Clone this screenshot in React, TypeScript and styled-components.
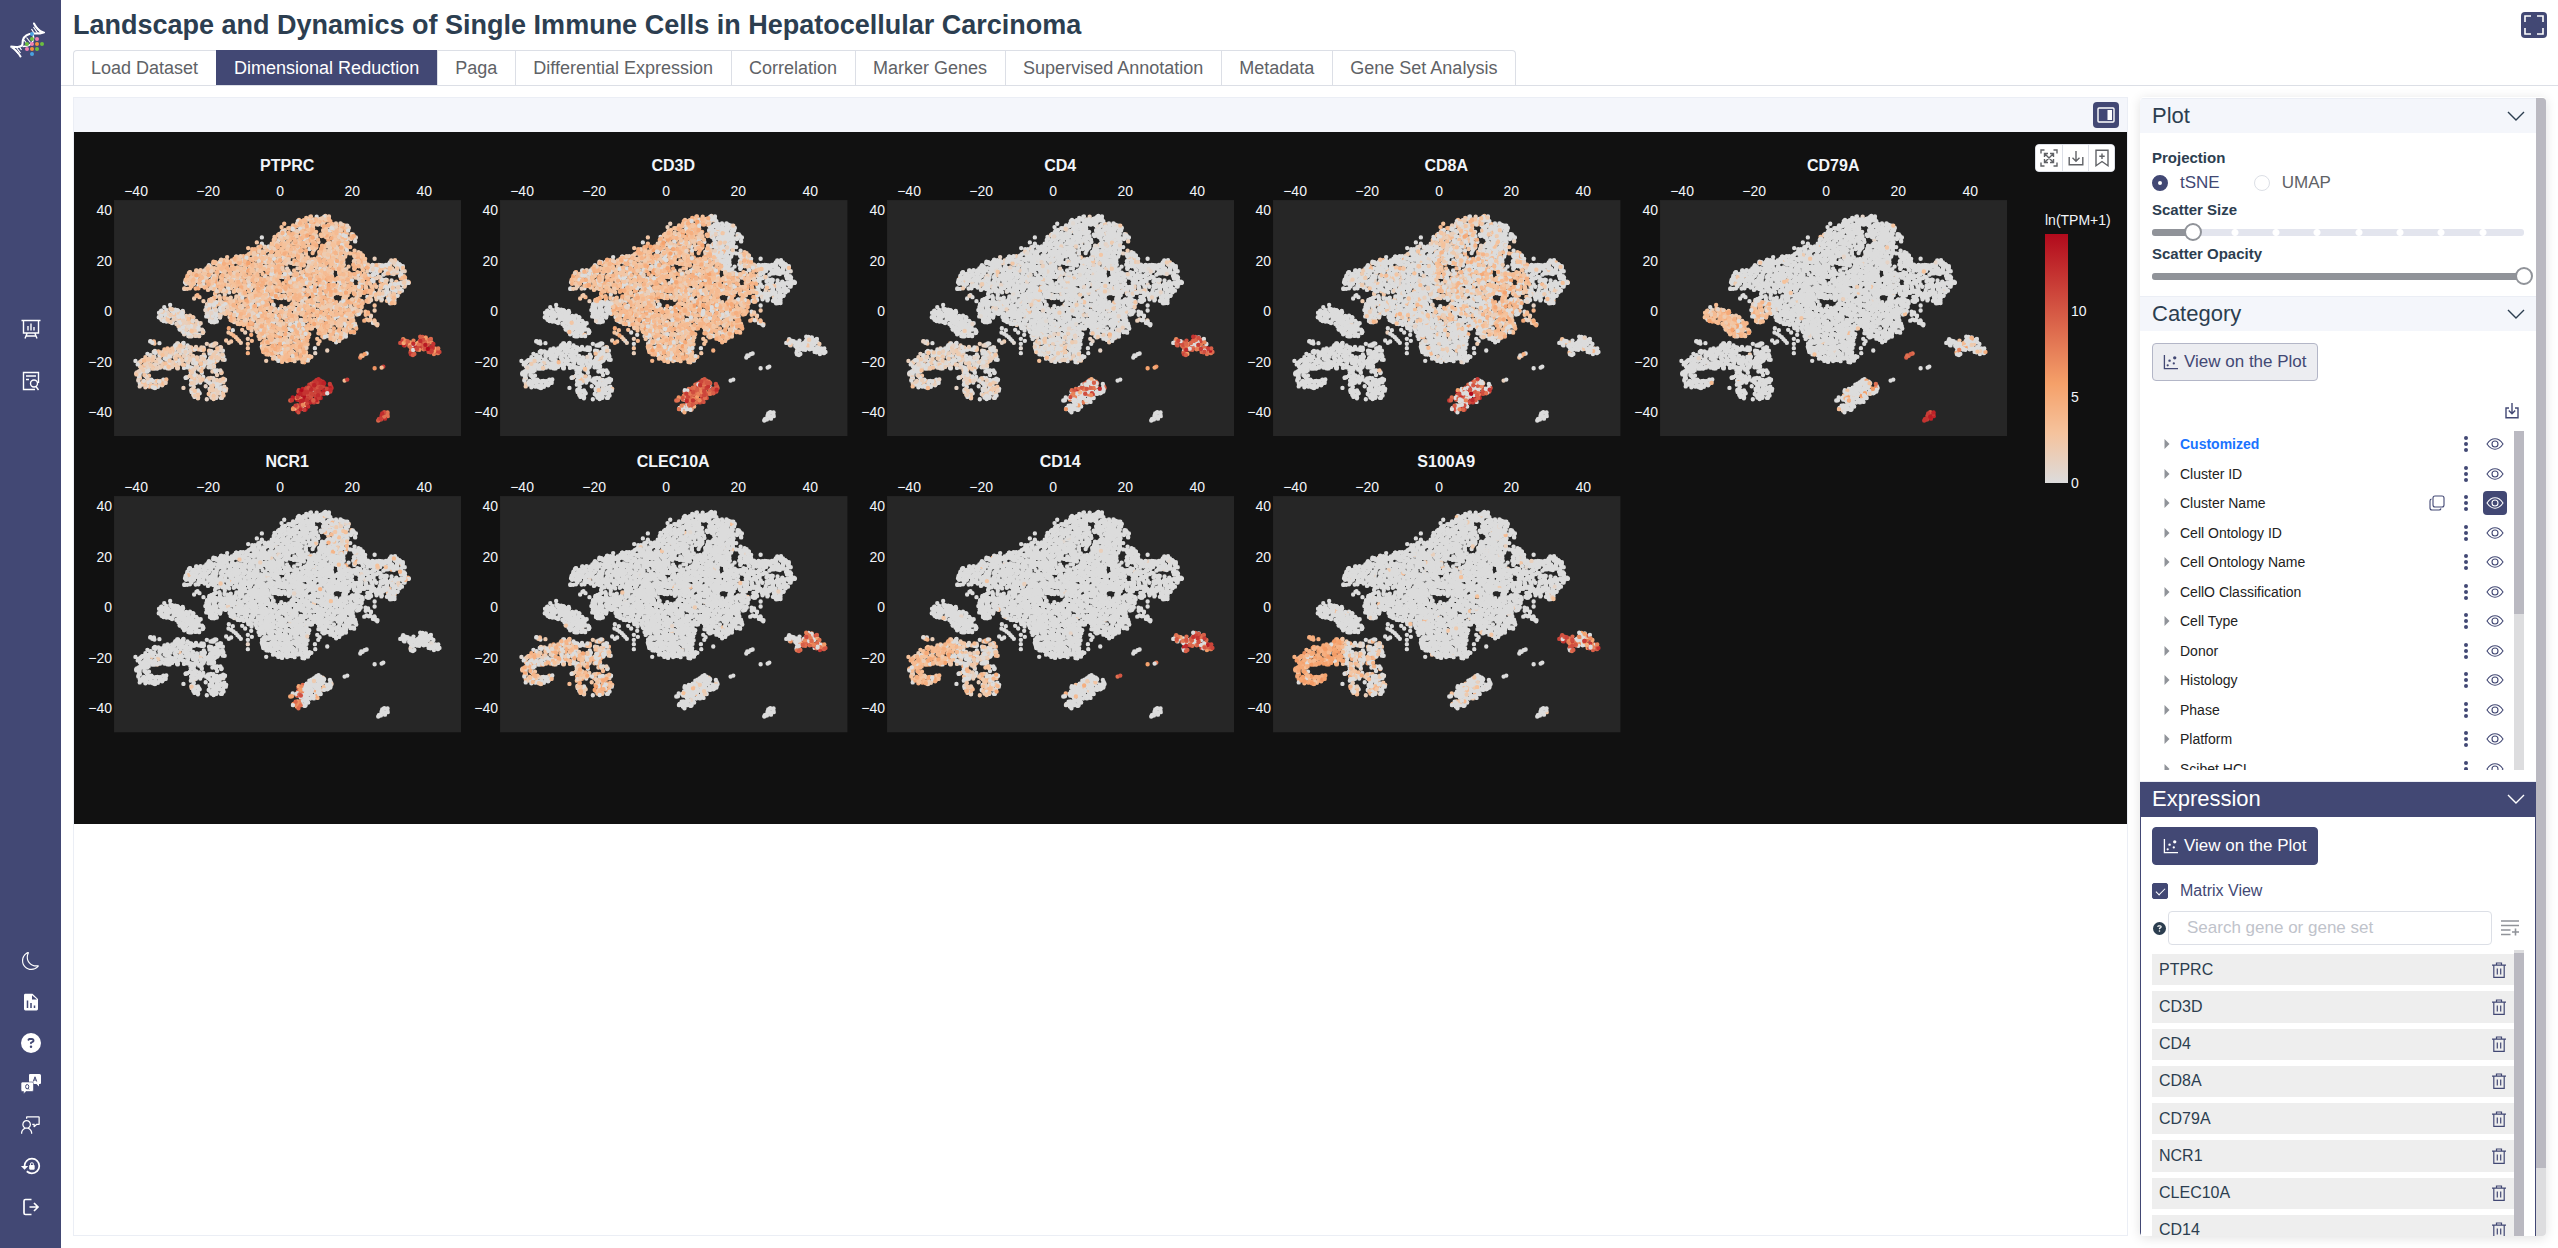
import React, { useState } from "react";
import styled, { createGlobalStyle } from "styled-components";
import { BsMoon } from "react-icons/bs";
import { FaCircleQuestion } from "react-icons/fa6";
import { MdLockReset } from "react-icons/md";
import { VscFeedback } from "react-icons/vsc";

const c = {
  brand: "#424874",
  ink: "#2c3e50",
  text: "#606266",
  line: "#dcdfe6",
  lineSoft: "#ebeef5",
  head: "#f4f6fb",
  grey: "#909399",
  thumb: "#bab9c1",
  track: "#dddddf",
};

const GlobalStyle = createGlobalStyle`
  *, *::before, *::after { box-sizing: border-box; }
  body {
    margin: 0;
    background: #fff;
    color: ${c.ink};
    font-family: "Liberation Sans", Arial, sans-serif;
    font-size: 16px;
    overflow: hidden;
  }
  button, input { font: inherit; color: inherit; margin: 0; }
  ul { list-style: none; margin: 0; padding: 0; }
  h1, h2 { margin: 0; }
  svg { display: block; }
`;

/* ---------- scatter data ---------- */

type Pt = [number, number];
type Region = "main" | "bcell" | "mac" | "prolif" | "dc" | "plasma" | "spotA" | "spotB" | "spotC";
type Cell = { x: number; y: number; region: Region };

function makeRandom(seed: number) {
  let s = seed;
  return () => {
    s = (s + 0x6d2b79f5) | 0;
    let t = Math.imul(s ^ (s >>> 15), 1 | s);
    t = (t + Math.imul(t ^ (t >>> 7), 61 | t)) ^ t;
    return ((t ^ (t >>> 14)) >>> 0) / 4294967296;
  };
}

const shapes: { region: Region; poly: Pt[] }[] = [
  {
    region: "main",
    poly: [[690,230],[745,228],[756,243],[750,252],[795,250],[804,258],[810,275],[830,295],[822,320],[836,317],[830,335],[858,348],[866,372],[885,377],[905,367],[930,357],[960,364],[976,385],[973,405],[987,430],[963,455],[943,490],[930,494],[915,487],[880,480],[858,492],[845,510],[828,540],[823,580],[800,588],[765,612],[740,603],[715,583],[695,580],[686,600],[680,630],[698,655],[683,672],[660,665],[585,667],[577,655],[547,640],[538,600],[528,580],[490,556],[458,553],[445,530],[425,520],[418,545],[400,554],[380,540],[372,515],[373,500],[385,478],[410,470],[400,455],[345,446],[307,450],[308,430],[330,392],[375,387],[390,367],[440,355],[500,345],[530,322],[577,310],[580,287],[600,275],[630,262],[650,242]],
  },
  { region: "main", poly: [[853,513],[868,520],[882,540],[900,547],[893,557],[870,550],[850,543]] },
  { region: "bcell", poly: [[230,512],[255,500],[268,490],[278,507],[310,512],[345,535],[363,550],[366,570],[378,578],[362,590],[330,592],[302,583],[288,560],[255,545],[232,540]] },
  {
    region: "mac",
    poly: [[165,660],[200,656],[222,632],[260,627],[290,608],[310,607],[325,617],[375,620],[373,630],[332,636],[345,652],[380,640],[390,610],[402,607],[430,622],[430,640],[443,656],[425,663],[412,665],[405,690],[425,690],[425,708],[440,722],[430,732],[440,750],[432,773],[400,778],[378,770],[388,750],[355,738],[332,745],[328,725],[307,710],[330,700],[320,685],[230,687],[205,692],[212,710],[240,720],[263,715],[260,728],[235,743],[205,747],[178,740],[164,718],[165,697],[185,690],[168,675]],
  },
  { region: "mac", poly: [[333,745],[358,752],[362,782],[332,778]] },
  { region: "mac", poly: [[203,595],[226,596],[226,614],[210,606]] },
  { region: "prolif", poly: [[690,725],[712,714],[734,725],[735,745],[753,727],[758,740],[750,757],[730,765],[712,788],[690,788],[680,808],[655,820],[637,812],[640,795],[656,784],[627,782],[630,772],[652,772],[653,747],[680,742]] },
  { region: "dc", poly: [[957,605],[972,594],[985,602],[1002,602],[1012,605],[1018,590],[1050,592],[1058,605],[1078,625],[1078,648],[1060,643],[1040,635],[1012,632],[998,648],[990,643],[985,622],[960,620]] },
  { region: "plasma", poly: [[887,832],[900,816],[922,813],[923,830],[908,845],[890,845]] },
];

const gaps: [number, number, number, number, number][] = [
  [818, 322, 14, 16, 0.15], [806, 366, 12, 22, 0.04], [764, 402, 8, 14, 0.05], [722, 303, 18, 11, 0.15],
  [716, 266, 8, 10, 0.1], [600, 490, 30, 13, 0.18], [930, 410, 26, 6, 0.05], [768, 472, 8, 8, 0],
  [903, 395, 9, 9, 0.2], [822, 425, 12, 12, 0.3], [640, 385, 28, 10, 0.35], [548, 405, 12, 10, 0.35],
  [440, 465, 30, 10, 0.4], [600, 425, 14, 10, 0.45], [888, 440, 10, 18, 0.3], [850, 470, 12, 8, 0.35],
  [690, 340, 20, 14, 0.45], [700, 575, 16, 8, 0.25], [380, 700, 30, 10, 0.35], [365, 740, 20, 14, 0.35], [760, 565, 10, 12, 0.45],
];

const loose: [number, number, Region][] = [
  [342,476,"main"],[349,468,"main"],[358,472,"main"],[352,466,"main"],[370,484,"main"],[445,578,"main"],[453,582,"main"],[460,587,"main"],[467,592,"main"],[472,598,"main"],
  [477,603,"main"],[482,609,"main"],[438,602,"main"],[446,609,"main"],[453,605,"main"],[446,565,"main"],[458,571,"main"],[486,570,"main"],[495,578,"main"],[514,572,"main"],
  [503,597,"main"],[503,612,"main"],[503,625,"main"],[503,640,"main"],[515,603,"main"],[513,585,"main"],[530,308,"main"],[504,325,"main"],[545,293,"main"],[558,663,"main"],
  [545,312,"main"],[516,328,"main"],[711,597,"main"],[741,632,"main"],[714,612,"main"],[705,640,"main"],[718,604,"main"],[704,625,"main"],[883,357,"main"],[883,497,"main"],[883,512,"main"],
  [612,252,"main"],[604,262,"main"],[441,352,"main"],[812,560,"main"],[828,566,"main"],[238,610,"mac"],[380,612,"mac"],[310,744,"mac"],[380,778,"mac"],[202,642,"mac"],[196,652,"mac"],
  [840,653,"spotA"],[847,648,"spotA"],[853,643,"spotA"],[859,641,"spotA"],[843,647,"spotA"],[793,722,"spotB"],[801,719,"spotB"],[883,685,"spotC"],[904,683,"spotC"],[909,680,"spotC"],
];

function inside(x: number, y: number, poly: Pt[]) {
  let hit = false;
  for (let i = 0, j = poly.length - 1; i < poly.length; j = i++) {
    const [xi, yi] = poly[i];
    const [xj, yj] = poly[j];
    if (yi > y !== yj > y && x < ((xj - xi) * (y - yi)) / (yj - yi) + xi) hit = !hit;
  }
  return hit;
}

function buildCells(): Cell[] {
  const rnd = makeRandom(41);
  const cells: Cell[] = [];
  const step = 6.6;
  for (const { region, poly } of shapes) {
    const xs = poly.map((p) => p[0]);
    const ys = poly.map((p) => p[1]);
    for (let y = Math.min(...ys) - 2; y <= Math.max(...ys) + 2; y += step) {
      for (let x = Math.min(...xs) - 2; x <= Math.max(...xs) + 2; x += step) {
        const px = x + (rnd() - 0.5) * 12;
        const py = y + (rnd() - 0.5) * 12;
        const keep = rnd();
        if (!inside(px, py, poly)) continue;
        let chance = px > 800 && region === "main" ? 0.86 : 0.96;
        if (region === "mac") chance = 0.86;
        for (const [gx, gy, rx, ry, k] of gaps) {
          if (((px - gx) / rx) ** 2 + ((py - gy) / ry) ** 2 < 1.3) chance = Math.min(chance, k * 0.6);
        }
        if (keep < chance) cells.push({ x: px, y: py, region });
      }
    }
  }
  for (const [x, y, region] of loose) cells.push({ x, y, region });
  for (let i = cells.length - 1; i > 0; i--) {
    const j = Math.floor(rnd() * (i + 1));
    [cells[i], cells[j]] = [cells[j], cells[i]];
  }
  return cells;
}

const cells = buildCells();

/* Each rule gives [share of silent cells, mean level, spread]. */
type Rule = [number, number, number];
const quiet: Rule = [0.988, 2, 1];

const nearB = (p: Cell) => p.region === "main" && p.x < 432 && p.y > 484;
const nkRight = (p: Cell) => p.region === "main" && p.x > 872 && p.y < 500;
const nkTop = (p: Cell) => p.region === "main" && p.x > 728 && p.x < 830 && p.y < 400 && p.y > 225 && p.x - 728 > (p.y - 330) * 0.8;

const genes: { name: string; rule: (p: Cell) => Rule }[] = [
  {
    name: "PTPRC",
    rule: (p) => {
      if (p.region === "prolif") return p.y > 765 && p.x < 680 ? [0.06, 10.5, 3.4] : [0.02, 11.8, 1.3];
      if (p.region === "dc") return [0.04, 9.5, 3];
      if (p.region === "plasma") return [0, 10.8, 1.3];
      if (p.region === "spotA") return [0.2, 6, 2];
      if (p.region === "spotB" || p.region === "spotC") return [0.3, 7, 3];
      if (p.region === "bcell") return [0.4, 1.5, 1];
      if (p.region === "mac") return [0.25, 1.6, 1.1];
      if (nearB(p)) return [0.6, 1.2, 1];
      if (nkRight(p)) return [0.4, 2, 1.3];
      return [0.1, 2.8, 1.2];
    },
  },
  {
    name: "CD3D",
    rule: (p) => {
      if (p.region === "prolif") return p.x < 660 || p.y > 795 ? [0.6, 8, 2] : [0.05, 9.3, 1.8];
      if (p.region === "main") {
        if (nkRight(p) || nearB(p)) return [0.96, 2, 1];
        if (nkTop(p)) return [0.85, 2, 1];
        return [0.15, 3, 1.2];
      }
      if (p.region === "dc" || p.region === "mac") return [0.95, 2, 1];
      return quiet;
    },
  },
  {
    name: "CD4",
    rule: (p) => {
      if (p.region === "dc") return [0.2, 8.8, 2.4];
      if (p.region === "prolif") return p.y < 765 ? [0.45, 8.2, 3] : [0.85, 6, 3];
      if (p.region === "spotC") return [0.3, 6, 1];
      if (p.region === "mac") return [0.5, 1.4, 0.9];
      if (p.region === "main") return p.y > 580 ? [0.7, 1.5, 1] : [0.92, 1.3, 0.9];
      return quiet;
    },
  },
  {
    name: "CD8A",
    rule: (p) => {
      if (p.region === "prolif") return [0.42, 10, 2.4];
      if (p.region === "spotA") return [0.3, 3.5, 1];
      if (p.region === "dc") return [0.9, 3, 1];
      if (p.region === "main") {
        if (nkRight(p)) return [0.88, 2.5, 1];
        if (nkTop(p)) return [0.85, 2.5, 1];
        if (p.y > 595) return [0.92, 2, 1];
        if (p.x > 740) return [0.36, 3, 1.3];
        if (p.x > 590) return p.y < 480 ? [0.48, 2.5, 1.3] : [0.7, 2.4, 1.2];
        return [0.84, 2.1, 1.2];
      }
      return quiet;
    },
  },
  {
    name: "CD79A",
    rule: (p) => {
      if (p.region === "bcell") return [0.1, 3.3, 1.3];
      if (nearB(p)) return [0.25, 2.7, 1.3];
      if (p.region === "plasma") return [0, 11.5, 1];
      if (p.region === "spotA") return [0, 9.5, 1];
      if (p.region === "prolif") return p.x > 735 ? [0.4, 7, 2] : [0.8, 3, 2];
      if (p.region === "dc") return [0.8, 3, 2];
      return quiet;
    },
  },
  {
    name: "NCR1",
    rule: (p) => {
      if (p.region === "prolif") return p.x < 668 ? [0.25, 7, 2.4] : [0.95, 3, 1];
      if (nkTop(p)) return [0.86, 2.8, 1.3];
      if (nkRight(p)) return [0.9, 2.8, 1.3];
      return quiet;
    },
  },
  {
    name: "CLEC10A",
    rule: (p) => {
      if (p.region === "mac") return [0.35, 2.9, 1.4];
      if (p.region === "dc") return p.x < 1000 ? [0.8, 8, 2] : [0.22, 8, 2.4];
      if (p.region === "prolif") return [0.92, 2, 1];
      return [0.993, 2, 1];
    },
  },
  {
    name: "CD14",
    rule: (p) => {
      if (p.region === "mac") return p.x < 300 ? [0.1, 3.3, 1.2] : [0.5, 2.4, 1.4];
      if (p.region === "dc") return [0.22, 9.3, 2.4];
      if (p.region === "spotB" || p.region === "spotC") return [0.3, 8, 2];
      if (p.region === "prolif") return [0.9, 3, 1];
      return [0.993, 2, 1];
    },
  },
  {
    name: "S100A9",
    rule: (p) => {
      if (p.region === "mac") return p.x < 310 ? [0.05, 4.7, 1] : [0.55, 2.8, 1.5];
      if (p.region === "dc") return p.x < 1010 ? [0.12, 9.5, 2.2] : [0.35, 7, 3];
      if (p.region === "prolif") return [0.85, 2.5, 1];
      return [0.982, 2, 1];
    },
  },
];

const MAX = 14.4;
const scale: [number, number[]][] = [
  [0, [220, 220, 220]],
  [0.2, [245, 195, 157]],
  [0.4, [245, 160, 105]],
  [1, [178, 10, 28]],
];
function colorAt(v: number) {
  const t = Math.max(0, Math.min(1, v / MAX));
  let i = 1;
  while (i < scale.length - 1 && t > scale[i][0]) i++;
  const [a, ca] = scale[i - 1];
  const [b, cb] = scale[i];
  const k = (t - a) / (b - a);
  return `rgb(${ca.map((n, j) => Math.round(n + (cb[j] - n) * k)).join(",")})`;
}

function buildLayers(index: number) {
  const rnd = makeRandom(900 + index * 77);
  const layers: { color: string; d: string }[] = [];
  const chunk = Math.ceil(cells.length / 5);
  for (let s = 0; s < cells.length; s += chunk) {
    const bins = new Map<number, string>();
    for (const p of cells.slice(s, s + chunk)) {
      const [zero, mean, spread] = genes[index].rule(p);
      const silent = rnd() < zero;
      const noise = (rnd() + rnd() + rnd() - 1.5) * 1.6;
      const v = silent ? 0 : Math.max(0, mean + noise * spread);
      const bin = Math.round(v * 2) / 2;
      bins.set(bin, (bins.get(bin) || "") + `M${p.x.toFixed(1)} ${p.y.toFixed(1)}h.1`);
    }
    [...bins.keys()].sort((a, b) => a - b).forEach((k) => layers.push({ color: colorAt(k), d: bins.get(k)! }));
  }
  return layers;
}

const ticks = [-40, -20, 0, 20, 40];
const label = (n: number) => (n < 0 ? `−${-n}` : `${n}`);

function GenePlot({ index }: { index: number }) {
  const layers = React.useMemo(() => buildLayers(index), [index]);
  return (
    <PlotSvg viewBox="0 0 386 296" role="img" aria-label={`${genes[index].name} expression`}>
      <text x="212" y="31" textAnchor="middle" fontSize="16" fontWeight="700">{genes[index].name}</text>
      {ticks.map((t, i) => (
        <text key={t} x={61 + i * 72} y="56" textAnchor="middle" fontSize="14">{label(t)}</text>
      ))}
      {ticks.map((t, i) => (
        <text key={t} x="37" y={277 - i * 50.5} textAnchor="end" fontSize="14">{label(t)}</text>
      ))}
      <rect x="39" y="60" width="347" height="236" fill="#262626" />
      <g transform="translate(39 60) scale(.3333) translate(-102 -181)" fill="none" strokeWidth="13" strokeLinecap="round">
        {layers.map((l, i) => <path key={i} d={l.d} stroke={l.color} />)}
      </g>
    </PlotSvg>
  );
}

/* ---------- icons ---------- */

const Icon = styled.svg.attrs({ "aria-hidden": true })<{ $w?: number; $h?: number; $s?: number }>`
  width: ${(p) => p.$w || 18}px;
  height: ${(p) => p.$h || p.$w || 18}px;
  fill: none;
  stroke: currentColor;
  stroke-width: ${(p) => p.$s || 1.4};
  flex: none;
`;

const Logo = () => (
  <Icon $w={36} viewBox="0 0 36 36" $s={2}>
    <path d="M25 1.5C27 6 30 9 34.5 10.5C29 12.500 25 11 20.500 12C13 14 13.500 19.500 13.500 22C13.500 25 8 25.500 1.500 24.500C6 27 9 30 11.500 34.500" stroke="#fff" strokeLinecap="round" />
    <path d="M24 12C25.500 17 24 22 18 24L13.500 24.500" stroke="#fff" strokeWidth="1.600" />
    <path d="M24.500 5l4 6M26.500 3.500l5 7M22.500 7l2.500 4M15 18l4 5M17.500 15.500l4 5M4.500 26l5 6M7.500 25.500l4 5.500M10.500 25l2 3" stroke="#fff" strokeWidth="1.200" />
    <g stroke="none">
      <circle cx="23" cy="12" r="2" fill="#4aa3e0" /><circle cx="23" cy="17" r="2" fill="#6cbf3f" /><circle cx="28" cy="17" r="2" fill="#f27fb2" />
      <circle cx="18" cy="22" r="2" fill="#6cbf3f" /><circle cx="23" cy="22" r="2" fill="#f27fb2" /><circle cx="28" cy="22" r="2" fill="#f5923e" /><circle cx="33" cy="22" r="2" fill="#6cbf3f" />
      <circle cx="18" cy="27" r="2" fill="#f27fb2" /><circle cx="23" cy="27" r="2" fill="#f5923e" /><circle cx="28" cy="27" r="2" fill="#6cbf3f" /><circle cx="23" cy="32" r="2" fill="#4aa3e0" />
    </g>
  </Icon>
);
const BoardIcon = () => (
  <Icon $w={20} viewBox="0 0 20 20"><path d="M.5 1.500h19M2.500 1.500v12.500h15V1.500M6 14.500L4 19.500M14 14.500l2 5M5.500 17h9M7 7v4.500M10 4.500v7M13 8v3.500" /></Icon>
);
const DocSearchIcon = () => (
  <Icon $w={20} viewBox="0 0 20 20"><path d="M17.500 12V1.500H2.500v17H14M5 5h10M5 8.500h3" /><circle cx="13" cy="12.500" r="3.500" /><path d="M15 15.500l2.500 3.500" /></Icon>
);
const FileIcon = () => (
  <Icon $w={18} viewBox="0 0 18 18"><path d="M3 .8h7.500L16 6v10a1.400 1.400 0 0 1-1.400 1.400H3.400A1.400 1.400 0 0 1 2 16V2A1.200 1.200 0 0 1 3 .8z" fill="currentColor" stroke="none" /><path d="M10 2.200V6.500h5z" fill={c.brand} stroke="none" /><path d="M5.500 7.500V15M9 10v5M12.500 12.500V15" stroke={c.brand} strokeWidth="1.500" /></Icon>
);
const QaIcon = () => (
  <Icon $w={20} viewBox="0 0 20 20">
    <path d="M9 0h9.500A1.500 1.500 0 0 1 20 1.500v7.500a1 1 0 0 1-1 1h-1v2.500L15.500 10H9.500A1.500 1.500 0 0 1 8 8.500V1A1 1 0 0 1 9 0z" fill="currentColor" stroke="none" />
    <path d="M1.500 8H11a1.500 1.500 0 0 1 1.500 1.500V16a1.500 1.500 0 0 1-1.500 1.500H5L2.500 20v-2.500h-1A1.500 1.500 0 0 1 0 16V9.500A1.500 1.500 0 0 1 1.500 8z" fill="currentColor" stroke={c.brand} strokeWidth=".6" />
    <path d="M12.300 7.500L14 2.800l1.700 4.700M12.900 6h2.200" stroke={c.brand} strokeWidth="1" /><ellipse cx="6.200" cy="12.700" rx="1.600" ry="2.200" stroke={c.brand} strokeWidth="1" /><path d="M6.800 14l1.200 1.500" stroke={c.brand} strokeWidth=".9" />
  </Icon>
);
const LogoutIcon = () => (
  <Icon $w={18} viewBox="0 0 18 18" $s={1.7}><path d="M9.500 1.500H3.500a1.500 1.500 0 0 0-1.500 1.500v12a1.500 1.500 0 0 0 1.500 1.500h6M7.500 9h8.500M12 5l4 4-4 4" /></Icon>
);
const FullIcon = () => (
  <Icon $w={20} viewBox="0 0 20 20" $s={1.6}><path d="M1 7V1h6M13 1h6v6M19 13v6h-6M7 19H1v-6" /></Icon>
);
const PanelIcon = () => (
  <Icon $w={18} $h={16} viewBox="0 0 18 16"><rect x="1" y="1" width="16" height="14" rx="1" /><rect x="10.500" y="3" width="4.500" height="10" fill="currentColor" stroke="none" /></Icon>
);
const AutoscaleIcon = () => (
  <Icon $w={18} viewBox="0 0 18 18"><path d="M1 4.500V1h3.500M13.500 1H17v3.500M17 13.500V17h-3.500M4.500 17H1v-3.500M5 5l8 8M13 5l-8 8M4.500 8V4.500H8M10 4.500h3.500V8M13.500 10v3.500H10M8 13.500H4.500V10" /></Icon>
);
const DownloadIcon = () => (
  <Icon $w={16} viewBox="0 0 16 16"><path d="M1.200 7v7.800h13.600V7M8 1v10M4.500 7.800L8 11.300l3.500-3.500" /></Icon>
);
const TrayIcon = () => (
  <Icon $w={14} $h={16} viewBox="0 0 14 16"><path d="M4 5H1v9.800h12V5h-3M7 0v10.500M3.800 7.500L7 10.700l3.200-3.200" /></Icon>
);
const BookmarkIcon = () => (
  <Icon $w={18} viewBox="0 0 18 18"><path d="M3 1.200h12v15.500l-6-4.200-6 4.200zM9 4.500v5.500M6.300 7.200h5.400" /></Icon>
);
const ScatterIcon = () => (
  <Icon $w={15} viewBox="0 0 16 16"><path d="M1.500 0v14.500H16" /><g fill="currentColor" stroke="none"><circle cx="5" cy="11" r="1.200" /><circle cx="7" cy="6" r="1.300" /><circle cx="11.500" cy="9" r="1.200" /><circle cx="12.500" cy="3" r="1.800" /></g></Icon>
);
const ChevronIcon = () => (
  <Icon $w={18} $h={10} viewBox="0 0 18 10"><path d="M1 1l8 8 8-8" /></Icon>
);
const CaretIcon = () => (
  <Icon $w={6} $h={10} viewBox="0 0 6 10"><path d="M.5 0L5.500 5 .5 10z" fill="#909399" stroke="none" /></Icon>
);
const DotsIcon = () => (
  <Icon $w={4} $h={16} viewBox="0 0 4 16"><g fill="currentColor" stroke="none"><circle cx="2" cy="2" r="2" /><circle cx="2" cy="8" r="2" /><circle cx="2" cy="14" r="2" /></g></Icon>
);
const EyeIcon = () => (
  <Icon $w={18} $h={12} viewBox="0 0 18 12" $s={1.1}><path d="M1 6C3.500 2.300 6 .8 9 .8S14.500 2.300 17 6C14.500 9.700 12 11.200 9 11.200S3.500 9.700 1 6z" /><circle cx="9" cy="6" r="3" /></Icon>
);
const CopyIcon = () => (
  <Icon $w={16} viewBox="0 0 16 16" $s={1.1}><rect x="4" y="1" width="11" height="11" rx="2" /><path d="M2.500 4A2 2 0 0 0 1 6v7a2 2 0 0 0 2 2h7a2 2 0 0 0 2-1.500" /></Icon>
);
const TrashIcon = () => (
  <Icon $w={16} viewBox="0 0 16 16" $s={1.2}><path d="M1 3.200h14M5.500 3V1h5v2M2.800 3.500v11.900h10.400V3.500M6.300 6.500v6M9.700 6.500v6" /></Icon>
);
const AddListIcon = () => (
  <Icon $w={18} viewBox="0 0 18 18" $s={1.6}><path d="M0 2h18M0 6.500h18M0 11h9.500M0 15.500h9.500M11 13h7M14.500 9.500v7" /></Icon>
);

/* ---------- shell ---------- */

const Shell = styled.div`display: flex; height: 100vh;`;
const Rail = styled.nav`
  flex: none;
  width: 61px;
  padding: 22px 0 25px;
  background: ${c.brand};
  color: #fff;
  display: flex;
  flex-direction: column;
  align-items: center;
  justify-content: space-between;
`;
const LogoLink = styled.a`color: inherit; margin-right: 8px;`;
const RailGroup = styled.div<{ $gap: number }>`display: flex; flex-direction: column; gap: ${(p) => p.$gap}px;`;
const RailMiddle = styled(RailGroup)`margin-bottom: 294px;`;
const RailButton = styled.button`
  width: 32px;
  height: 32px;
  padding: 0;
  border: 0;
  background: none;
  color: #fff;
  display: flex;
  align-items: center;
  justify-content: center;
`;
const Page = styled.div`flex: 1; min-width: 0; display: flex; flex-direction: column;`;
const TopBar = styled.header`
  height: 50px;
  padding: 0 11px 0 12px;
  display: flex;
  align-items: center;
  justify-content: space-between;
`;
const Title = styled.h1`font-size: 27px; line-height: 32px; font-weight: 700;`;
const SolidIconButton = styled.button`
  width: 26px;
  height: 26px;
  padding: 0;
  border: 0;
  border-radius: 4px;
  background: ${c.brand};
  color: #fff;
  display: flex;
  align-items: center;
  justify-content: center;
`;
const Tabs = styled.div`display: flex; height: 36px; padding-left: 12px; border-bottom: 1px solid ${c.line};`;
const Tab = styled.button<{ $active?: boolean }>`
  padding: 0 18px 0 17px;
  border: 0 solid ${c.line};
  border-top-width: 1px;
  border-left-width: 1px;
  background: #fff;
  color: ${c.text};
  font-size: 18px;
  line-height: 34px;
  &:first-child { border-top-left-radius: 4px; }
  &:last-child { border-right-width: 1px; border-top-right-radius: 4px; }
  ${(p) => p.$active && `background: ${c.brand}; border-color: ${c.brand}; color: #fff;`}
`;
const Content = styled.main`flex: 1; min-height: 0; display: flex; gap: 12px; padding: 11px 12px 12px;`;

/* ---------- plot card ---------- */

const Card = styled.section`flex: 1; min-width: 0; border: 1px solid ${c.lineSoft};`;
const CardHead = styled.div`
  height: 34px;
  padding-right: 8px;
  background: ${c.head};
  display: flex;
  align-items: center;
  justify-content: flex-end;
`;
const Canvas = styled.div`background: #111; display: grid; grid-template-columns: 1fr 120px; padding: 8px 0 91px 1px;`;
const PlotGrid = styled.div`display: grid; grid-template-columns: repeat(5, 1fr);`;
const PlotSvg = styled.svg`width: 100%; height: auto; fill: #f2f5fa; font-family: "Liberation Sans", Arial, sans-serif;`;
const Aside = styled.div`display: flex; flex-direction: column; align-items: flex-end; padding: 4px 12px 0 0; gap: 40px;`;
const ToolGroup = styled.div`display: flex; border: 1px solid ${c.line}; border-radius: 4px; background: #fff; overflow: hidden;`;
const Tool = styled.button`
  width: 26px;
  height: 26px;
  padding: 0;
  border: 0;
  background: #fff;
  color: ${c.text};
  display: flex;
  align-items: center;
  justify-content: center;
  & + & { border-left: 1px solid ${c.line}; }
`;
const Legend = styled.div`width: 70px; color: #f2f5fa; font-size: 14px; line-height: 16px;`;
const LegendBody = styled.div`display: flex; gap: 3px; margin-top: 6px;`;
const LegendBar = styled.div`
  width: 23px;
  height: 249px;
  background: linear-gradient(to top, rgb(220,220,220), rgb(245,195,157) 20%, rgb(245,160,105) 40%, rgb(178,10,28));
`;
const LegendTicks = styled.div`height: 257px; display: flex; flex-direction: column; justify-content: flex-end; gap: 70px;`;

/* ---------- side panel ---------- */

const Side = styled.aside`
  flex: none;
  width: 406px;
  margin-top: 1px;
  display: flex;
  border-radius: 4px;
  overflow: hidden;
  background: #fff;
`;
const SideShadow = styled.div`display: flex; border-radius: 4px; box-shadow: 0 2px 12px rgba(0, 0, 0, 0.12);`;
const Sections = styled.div`flex: 1; min-width: 0; display: flex; flex-direction: column;`;
const Scroll = styled.div`flex: none; width: 10px; background: ${c.track}; display: flex; flex-direction: column;`;
const Thumb = styled.div<{ $share: number }>`flex: 0 0 ${(p) => p.$share}%; background: ${c.thumb};`;
const SectionHead = styled.button<{ $active?: boolean }>`
  flex: none;
  width: 100%;
  height: 35px;
  padding: 0 11px 0 12px;
  border: 0;
  border-top: 1px solid ${c.lineSoft};
  background: ${(p) => (p.$active ? c.brand : c.head)};
  color: ${(p) => (p.$active ? "#fff" : c.ink)};
  display: flex;
  align-items: center;
  justify-content: space-between;
  text-align: left;
`;
const Heading = styled.h2`font-size: 22px; line-height: 32px; font-weight: 400;`;
const PlotBody = styled.div`height: 163px; padding: 16px 12px 0; display: flex; flex-direction: column;`;
const FieldName = styled.label`font-size: 15px; line-height: 18px; font-weight: 700;`;
const RadioRow = styled.div`display: flex; gap: 34px; height: 32px; margin-bottom: 2px; align-items: center;`;
const RadioLabel = styled.label<{ $on?: boolean }>`
  display: flex;
  align-items: center;
  gap: 12px;
  font-size: 17px;
  color: ${(p) => (p.$on ? c.brand : c.text)};
`;
const Radio = styled.input.attrs({ type: "radio" })`
  appearance: none;
  width: 16px;
  height: 16px;
  border: 1px solid ${c.line};
  border-radius: 50%;
  background: #fff;
  &:checked { border: 6px solid ${c.brand}; }
`;
const SliderBox = styled.div`display: grid; height: 26px; align-items: center;`;
const SliderBar = styled.div`
  grid-area: 1 / 1;
  height: 7px;
  border-radius: 3px;
  background: #e3e5ee;
  overflow: hidden;
  display: flex;
`;
const Stop = styled.span`
  flex: 1;
  background:
    radial-gradient(circle at 0 50%, #fff 3px, transparent 4px),
    radial-gradient(circle at 100% 50%, #fff 3px, transparent 4px);
  &:first-child { background: none; }
  &:last-child { background: radial-gradient(circle at 0 50%, #fff 3px, transparent 4px); }
`;
const SliderFill = styled.div`grid-area: 1 / 1; height: 7px; border-radius: 3px; background: ${c.grey};`;
const Range = styled.input.attrs({ type: "range" })`
  grid-area: 1 / 1;
  appearance: none;
  width: calc(100% + 18px);
  height: 18px;
  margin: 0 -9px;
  background: transparent;
  &::-webkit-slider-thumb {
    appearance: none;
    width: 18px;
    height: 18px;
    border: 2px solid ${c.grey};
    border-radius: 50%;
    background: #fff;
  }
`;
const CategoryBody = styled.div`height: 450px; padding: 12px 12px 11px; display: flex; flex-direction: column; align-items: flex-start;`;
const ViewButton = styled.button<{ $solid?: boolean }>`
  flex: none;
  height: 38px;
  padding: 0 10px;
  border: 1px solid ${(p) => (p.$solid ? c.brand : "#b3b6c7")};
  border-radius: 4px;
  background: ${(p) => (p.$solid ? c.brand : "#ecedf1")};
  color: ${(p) => (p.$solid ? "#fff" : c.brand)};
  display: flex;
  align-items: center;
  gap: 6px;
  font-size: 17px;
  line-height: 20px;
  white-space: nowrap;
`;
const PlainButton = styled.button<{ $active?: boolean }>`
  height: 24px;
  min-width: 24px;
  padding: 0;
  border: 0;
  border-radius: 4px;
  background: ${(p) => (p.$active ? c.brand : "transparent")};
  color: ${(p) => (p.$active ? "#fff" : c.brand)};
  display: flex;
  align-items: center;
  justify-content: center;
`;
const ExportRow = styled.div`width: 100%; height: 50px; padding-top: 18px; display: flex; justify-content: flex-end;`;
const ListFrame = styled.div`flex: 1; min-height: 0; width: 100%; display: flex; overflow: hidden;`;
const CategoryList = styled.ul`flex: 1; height: 354px; display: grid; grid-auto-rows: 1fr; font-size: 14px; color: #222;`;
const CategoryItem = styled.li`display: flex; align-items: center; padding: 0 7px 3px 12px;`;
const CategoryName = styled.span<{ $accent?: boolean }>`
  flex: 1;
  margin-left: 10px;
  line-height: 18px;
  ${(p) => p.$accent && "color: #1a73ff; font-weight: 700;"}
`;
const RowTools = styled.div`display: flex; gap: 5px;`;
const ExpressionBody = styled.div`
  flex: 1;
  min-height: 0;
  padding: 10px 11px 0;
  border: 1px solid ${c.brand};
  border-bottom: 0;
  display: flex;
  flex-direction: column;
  align-items: flex-start;
`;
const CheckLabel = styled.label`display: flex; align-items: center; gap: 12px; height: 30px; margin-top: 11px; color: ${c.brand};`;
const CheckBox = styled.input.attrs({ type: "checkbox" })`
  appearance: none;
  width: 16px;
  height: 16px;
  border: 1px solid ${c.brand};
  border-radius: 2px;
  display: grid;
  place-items: center;
  &:checked { background: ${c.brand}; }
  &:checked::before {
    content: "";
    width: 9px;
    height: 5px;
    border: solid #fff;
    border-width: 0 0 1px 1px;
    transform: translateY(-1px) rotate(-45deg);
  }
`;
const SearchRow = styled.div`width: 100%; height: 34px; margin-top: 5px; padding-right: 2px; display: flex; align-items: center;`;
const HelpMark = styled.span`flex: none; width: 16px; font-size: 13px; padding-left: 1px;`;
const Search = styled.input`
  flex: 1;
  min-width: 0;
  height: 34px;
  padding: 0 18px;
  border: 1px solid ${c.line};
  border-radius: 4px;
  font-size: 17px;
  &::placeholder { color: #bfc3cb; opacity: 1; }
`;
const AddButton = styled(PlainButton)`margin-left: 6px; color: ${c.grey};`;
const GeneFrame = styled(ListFrame)`margin-top: 5px;`;
const GeneList = styled.ul`flex: 1; height: 296px; padding-top: 4px; display: grid; grid-auto-rows: 1fr; gap: 6px;`;
const GeneItem = styled.li`display: flex; align-items: center; justify-content: space-between; padding: 0 3px 0 7px; background: #eee;`;
const ThumbRest = styled.div`flex: 1; margin-top: 3px; background: ${c.thumb};`;

const tabs = ["Load Dataset", "Dimensional Reduction", "Paga", "Differential Expression", "Correlation", "Marker Genes", "Supervised Annotation", "Metadata", "Gene Set Analysis"];
const categories = ["Customized", "Cluster ID", "Cluster Name", "Cell Ontology ID", "Cell Ontology Name", "CellO Classification", "Cell Type", "Donor", "Histology", "Phase", "Platform", "Scibet HCL"];

export default function App() {
  const [tab, setTab] = useState("Dimensional Reduction");
  const [projection, setProjection] = useState("tSNE");
  const [size, setSize] = useState(2);
  const [opacity, setOpacity] = useState(100);
  const [shown, setShown] = useState("Cluster Name");
  const [matrix, setMatrix] = useState(true);

  return (
    <Shell>
      <GlobalStyle />
      <Rail>
        <LogoLink href="#" aria-label="Home"><Logo /></LogoLink>
        <RailMiddle $gap={20}>
          <RailButton aria-label="Dashboard"><BoardIcon /></RailButton>
          <RailButton aria-label="Records"><DocSearchIcon /></RailButton>
        </RailMiddle>
        <RailGroup $gap={9}>
          <RailButton aria-label="Dark mode"><BsMoon size={18} /></RailButton>
          <RailButton aria-label="Report"><FileIcon /></RailButton>
          <RailButton aria-label="Help"><FaCircleQuestion size={20} /></RailButton>
          <RailButton aria-label="Questions"><QaIcon /></RailButton>
          <RailButton aria-label="Feedback"><VscFeedback size={20} /></RailButton>
          <RailButton aria-label="Reset password"><MdLockReset size={22} /></RailButton>
          <RailButton aria-label="Log out"><LogoutIcon /></RailButton>
        </RailGroup>
      </Rail>
      <Page>
        <TopBar>
          <Title>Landscape and Dynamics of Single Immune Cells in Hepatocellular Carcinoma</Title>
          <SolidIconButton aria-label="Full screen"><FullIcon /></SolidIconButton>
        </TopBar>
        <Tabs>
          {tabs.map((t) => (
            <Tab key={t} $active={t === tab} onClick={() => setTab(t)}>{t}</Tab>
          ))}
        </Tabs>
        <Content>
          <Card>
            <CardHead>
              <SolidIconButton aria-label="Toggle side panel"><PanelIcon /></SolidIconButton>
            </CardHead>
            <Canvas>
              <PlotGrid>
                {genes.map((g, i) => <GenePlot key={g.name} index={i} />)}
              </PlotGrid>
              <Aside>
                <ToolGroup>
                  <Tool aria-label="Autoscale"><AutoscaleIcon /></Tool>
                  <Tool aria-label="Download"><DownloadIcon /></Tool>
                  <Tool aria-label="Bookmark"><BookmarkIcon /></Tool>
                </ToolGroup>
                <Legend>
                  ln(TPM+1)
                  <LegendBody>
                    <LegendBar />
                    <LegendTicks><span>10</span><span>5</span><span>0</span></LegendTicks>
                  </LegendBody>
                </Legend>
              </Aside>
            </Canvas>
          </Card>
          <SideShadow>
            <Side>
              <Sections>
                <SectionHead><Heading>Plot</Heading><ChevronIcon /></SectionHead>
                <PlotBody>
                  <FieldName as="span">Projection</FieldName>
                  <RadioRow>
                    {["tSNE", "UMAP"].map((p) => (
                      <RadioLabel key={p} $on={p === projection}>
                        <Radio name="projection" checked={p === projection} onChange={() => setProjection(p)} />
                        {p}
                      </RadioLabel>
                    ))}
                  </RadioRow>
                  <FieldName htmlFor="size">Scatter Size</FieldName>
                  <SliderBox>
                    <SliderBar>{Array.from({ length: 9 }, (_, i) => <Stop key={i} />)}</SliderBar>
                    <SliderFill style={{ width: `${((size - 1) / 9) * 100}%` }} />
                    <Range id="size" min={1} max={10} value={size} onChange={(e) => setSize(+e.target.value)} />
                  </SliderBox>
                  <FieldName htmlFor="opacity">Scatter Opacity</FieldName>
                  <SliderBox>
                    <SliderBar />
                    <SliderFill style={{ width: `${opacity}%` }} />
                    <Range id="opacity" min={0} max={100} value={opacity} onChange={(e) => setOpacity(+e.target.value)} />
                  </SliderBox>
                </PlotBody>
                <SectionHead><Heading>Category</Heading><ChevronIcon /></SectionHead>
                <CategoryBody>
                  <ViewButton><ScatterIcon />View on the Plot</ViewButton>
                  <ExportRow><PlainButton aria-label="Export categories"><TrayIcon /></PlainButton></ExportRow>
                  <ListFrame>
                    <CategoryList>
                      {categories.map((name, i) => (
                        <CategoryItem key={name}>
                          <CaretIcon />
                          <CategoryName $accent={i === 0}>{name}</CategoryName>
                          <RowTools>
                            {name === shown && <PlainButton aria-label={`Copy ${name}`}><CopyIcon /></PlainButton>}
                            <PlainButton aria-label={`${name} options`}><DotsIcon /></PlainButton>
                            <PlainButton aria-label={`Show ${name}`} $active={name === shown} onClick={() => setShown(name)}><EyeIcon /></PlainButton>
                          </RowTools>
                        </CategoryItem>
                      ))}
                    </CategoryList>
                    <Scroll><Thumb $share={54} /></Scroll>
                  </ListFrame>
                </CategoryBody>
                <SectionHead $active><Heading>Expression</Heading><ChevronIcon /></SectionHead>
                <ExpressionBody>
                  <ViewButton $solid><ScatterIcon />View on the Plot</ViewButton>
                  <CheckLabel>
                    <CheckBox checked={matrix} onChange={(e) => setMatrix(e.target.checked)} />
                    Matrix View
                  </CheckLabel>
                  <SearchRow>
                    <HelpMark><FaCircleQuestion /></HelpMark>
                    <Search aria-label="Search gene or gene set" placeholder="Search gene or gene set" />
                    <AddButton aria-label="Add gene list"><AddListIcon /></AddButton>
                  </SearchRow>
                  <GeneFrame>
                    <GeneList>
                      {genes.slice(0, 8).map((g) => (
                        <GeneItem key={g.name}>
                          {g.name}
                          <PlainButton aria-label={`Remove ${g.name}`}><TrashIcon /></PlainButton>
                        </GeneItem>
                      ))}
                    </GeneList>
                    <Scroll><ThumbRest /></Scroll>
                  </GeneFrame>
                </ExpressionBody>
              </Sections>
              <Scroll><Thumb $share={94} /></Scroll>
            </Side>
          </SideShadow>
        </Content>
      </Page>
    </Shell>
  );
}
